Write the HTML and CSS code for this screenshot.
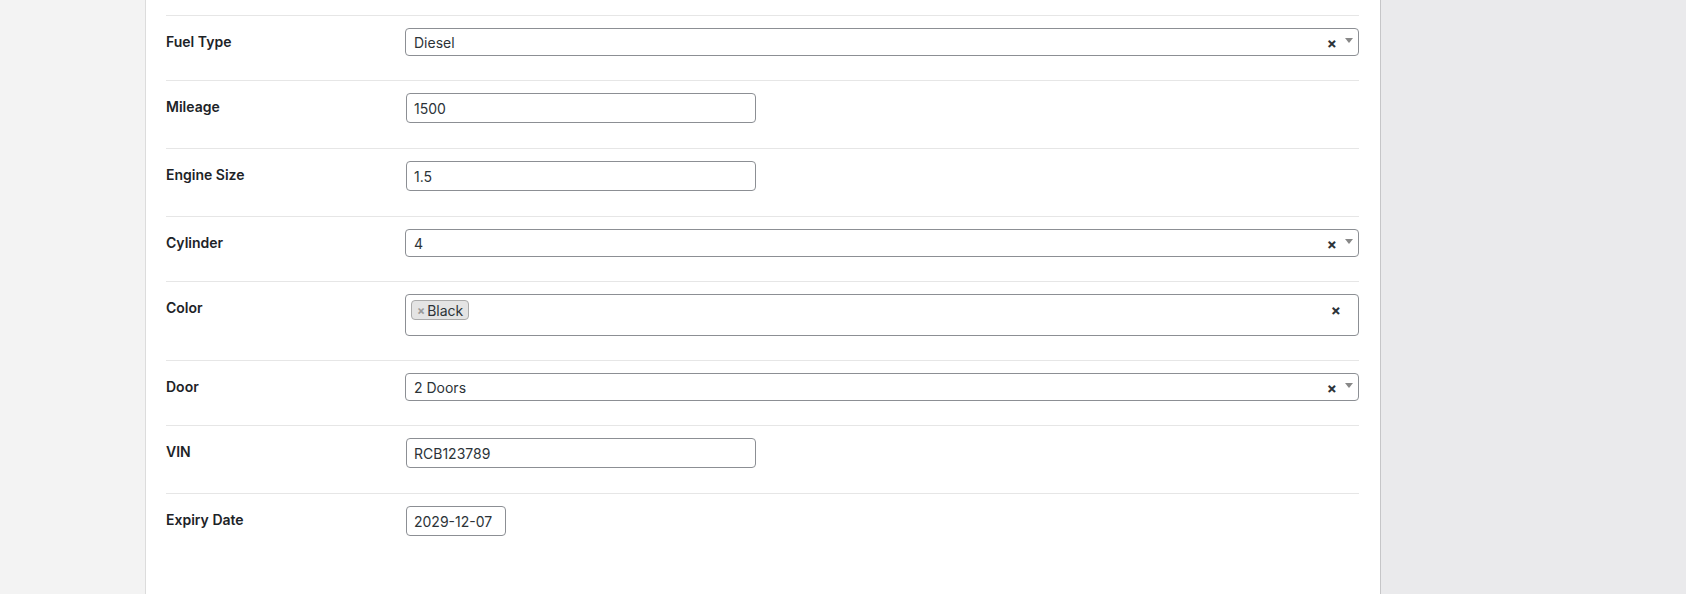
FILE: index.html
```html
<!DOCTYPE html>
<html lang="en">
<head>
<meta charset="utf-8">
<title>Vehicle details</title>
<link rel="stylesheet" href="styles.css">
</head>
<body>
<div class="layout">
  <aside class="side-left"></aside>
  <main class="panel">
    <div class="fields">
      <div class="field">
        <div class="label">Fuel Type</div>
        <div class="control">
          <div class="select2 single">
            <span class="value">Diesel</span>
            <span class="clear">×</span>
            <span class="arrow"></span>
          </div>
        </div>
      </div>
      <div class="field">
        <div class="label">Mileage</div>
        <div class="control"><input class="text-input" type="text" value="1500"></div>
      </div>
      <div class="field">
        <div class="label">Engine Size</div>
        <div class="control"><input class="text-input" type="text" value="1.5"></div>
      </div>
      <div class="field">
        <div class="label">Cylinder</div>
        <div class="control">
          <div class="select2 single">
            <span class="value">4</span>
            <span class="clear">×</span>
            <span class="arrow"></span>
          </div>
        </div>
      </div>
      <div class="field">
        <div class="label">Color</div>
        <div class="control">
          <div class="select2 multi">
            <div class="choices">
              <span class="choice"><span class="choice-remove">×</span>Black</span>
            </div>
            <span class="clear multi-clear">×</span>
          </div>
        </div>
      </div>
      <div class="field">
        <div class="label">Door</div>
        <div class="control">
          <div class="select2 single">
            <span class="value">2 Doors</span>
            <span class="clear">×</span>
            <span class="arrow"></span>
          </div>
        </div>
      </div>
      <div class="field">
        <div class="label">VIN</div>
        <div class="control"><input class="text-input" type="text" value="RCB123789"></div>
      </div>
      <div class="field">
        <div class="label">Expiry Date</div>
        <div class="control"><input class="text-input date-input" type="text" value="2029-12-07"></div>
      </div>
    </div>
  </main>
  <aside class="side-right"></aside>
</div>
</body>
</html>
```

FILE: styles.css
```css
* { box-sizing: border-box; }

html, body {
  margin: 0;
  padding: 0;
  height: 100%;
}

body {
  font-family: Inter, Roboto, "Noto Sans", sans-serif;
  font-size: 14px;
  color: #1d2327;
  background: #ffffff;
  overflow: hidden;
}

.layout {
  display: flex;
  height: 594px;
}

.side-left {
  width: 146px;
  flex: 0 0 146px;
  background: #f3f3f3;
  border-right: 1px solid #dcdcdc;
}

.panel {
  width: 1235px;
  flex: 0 0 1235px;
  background: #ffffff;
  border-right: 1px solid #c6c6c8;
  padding: 15px 21px 0 20px;
}

.side-right {
  flex: 1 1 auto;
  background: #eaeaec;
}

.fields {
  display: flex;
  flex-direction: column;
}

.field {
  display: flex;
  align-items: flex-start;
  border-top: 1px solid #e6e6e6;
  padding: 12px 0 24px;
}

.label {
  width: 239px;
  flex: 0 0 239px;
  font-weight: 600;
  font-size: 14px;
  line-height: 20px;
  margin-top: 4px;
  color: #1d2327;
}

.control {
  flex: 1 1 auto;
  display: flex;
}

.text-input {
  width: 350px;
  height: 30px;
  margin: 0 0 1px 1px;
  border: 1px solid #8c8f94;
  border-radius: 4px;
  padding: 0 7px;
  font-family: inherit;
  font-size: 14px;
  color: #2c3338;
  background: #ffffff;
  outline: none;
}

.date-input {
  width: 100px;
}

.select2 {
  width: 100%;
  border: 1px solid #8c8f94;
  border-radius: 4px;
  background: #ffffff;
  position: relative;
  display: flex;
  align-items: center;
}

.select2.single {
  height: 28px;
  padding: 0 0 0 8px;
}

.select2 .value {
  flex: 1 1 auto;
  color: #2c3338;
  font-size: 14px;
  line-height: 26px;
  margin-top: 1px;
}

.select2 .clear {
  font-weight: 700;
  font-size: 15px;
  line-height: 1;
  color: #2c3338;
  margin-right: 8px;
  margin-top: 3px;
}

.select2 .arrow {
  width: 0;
  height: 0;
  border-style: solid;
  border-width: 5px 4px 0 4px;
  border-color: #888888 transparent transparent transparent;
  margin-right: 5px;
  margin-top: -3px;
}

.select2.multi {
  height: 42px;
  align-items: flex-start;
  padding: 0 5px;
}

.choices {
  flex: 1 1 auto;
  display: flex;
}

.choice {
  display: inline-flex;
  align-items: center;
  margin-top: 5px;
  height: 20px;
  padding: 0 5px;
  background: #e4e4e4;
  border: 1px solid #aaaaaa;
  border-radius: 4px;
  font-size: 14px;
  color: #2c3338;
}

.choice-remove {
  color: #999999;
  font-weight: 700;
  font-size: 12px;
  margin-right: 2px;
}

.multi-clear {
  margin-top: 8px !important;
  margin-right: 12px !important;
}
```
